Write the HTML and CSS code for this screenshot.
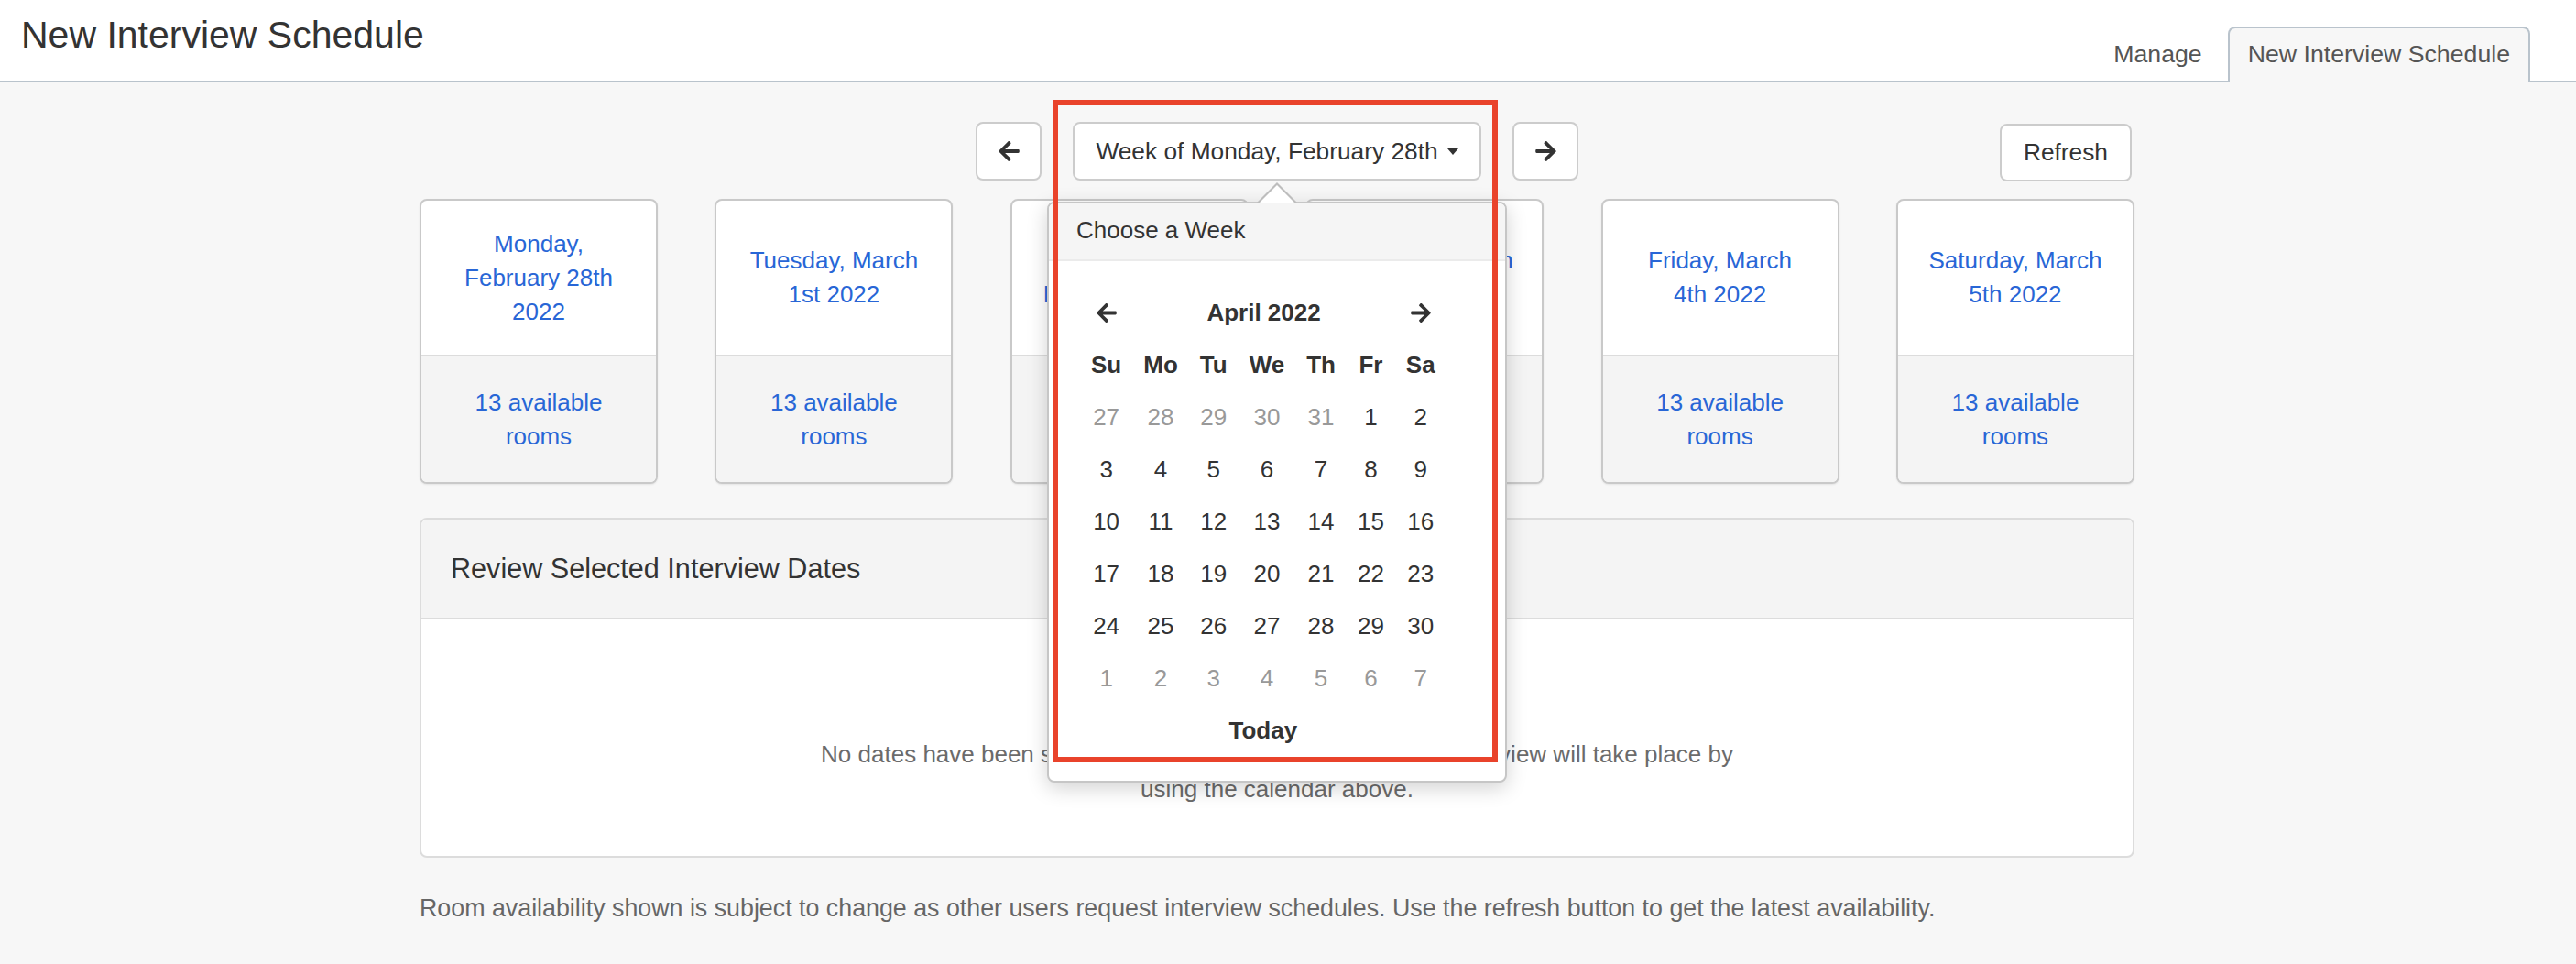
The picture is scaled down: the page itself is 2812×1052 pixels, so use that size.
FILE: index.html
```html
<!DOCTYPE html>
<html lang="en">
<head>
<meta charset="utf-8">
<title>New Interview Schedule</title>
<link rel="stylesheet" href="styles.css">
</head>
<body>
<header class="topbar">
  <h1 class="page-title">New Interview Schedule</h1>
  <ul class="tabs">
    <li class="tab">Manage</li>
    <li class="tab tab-active">New Interview Schedule</li>
  </ul>
</header>

<main class="page">
  <div class="container">
    <div class="toolbar">
      <div class="week-nav">
        <button class="btn btn-icon" type="button" aria-label="Previous week">
          <svg class="arrow" viewBox="0 37 448 438" aria-hidden="true"><path d="M257.5 445.1l-22.2 22.2c-9.4 9.4-24.6 9.4-33.9 0L7 273c-9.4-9.4-9.4-24.6 0-33.9L201.4 44.7c9.4-9.4 24.6-9.4 33.9 0l22.2 22.2c9.5 9.5 9.3 25-.4 34.3L136.6 216H424c13.3 0 24 10.7 24 24v32c0 13.3-10.7 24-24 24H136.6l120.5 114.8c9.8 9.3 10 24.8.4 34.3z"/></svg>
        </button>
        <div class="week-picker">
          <button class="btn btn-week" type="button">Week of Monday, February 28th<span class="caret"></span></button>
          <div class="popover">
            <div class="popover-title">Choose a Week</div>
            <div class="popover-body">
              <table class="cal">
                <thead>
                  <tr>
                    <th class="cal-nav"><svg class="arrow arrow-sm" viewBox="0 37 448 438" aria-hidden="true"><path d="M257.5 445.1l-22.2 22.2c-9.4 9.4-24.6 9.4-33.9 0L7 273c-9.4-9.4-9.4-24.6 0-33.9L201.4 44.7c9.4-9.4 24.6-9.4 33.9 0l22.2 22.2c9.5 9.5 9.3 25-.4 34.3L136.6 216H424c13.3 0 24 10.7 24 24v32c0 13.3-10.7 24-24 24H136.6l120.5 114.8c9.8 9.3 10 24.8.4 34.3z"/></svg></th>
                    <th colspan="5">April 2022</th>
                    <th class="cal-nav"><svg class="arrow arrow-sm arrow-right" viewBox="0 37 448 438" aria-hidden="true"><path d="M257.5 445.1l-22.2 22.2c-9.4 9.4-24.6 9.4-33.9 0L7 273c-9.4-9.4-9.4-24.6 0-33.9L201.4 44.7c9.4-9.4 24.6-9.4 33.9 0l22.2 22.2c9.5 9.5 9.3 25-.4 34.3L136.6 216H424c13.3 0 24 10.7 24 24v32c0 13.3-10.7 24-24 24H136.6l120.5 114.8c9.8 9.3 10 24.8.4 34.3z"/></svg></th>
                  </tr>
                  <tr>
                    <th>Su</th><th>Mo</th><th>Tu</th><th>We</th><th>Th</th><th>Fr</th><th>Sa</th>
                  </tr>
                </thead>
                <tbody>
                  <tr><td class="old">27</td><td class="old">28</td><td class="old">29</td><td class="old">30</td><td class="old">31</td><td>1</td><td>2</td></tr>
                  <tr><td>3</td><td>4</td><td>5</td><td>6</td><td>7</td><td>8</td><td>9</td></tr>
                  <tr><td>10</td><td>11</td><td>12</td><td>13</td><td>14</td><td>15</td><td>16</td></tr>
                  <tr><td>17</td><td>18</td><td>19</td><td>20</td><td>21</td><td>22</td><td>23</td></tr>
                  <tr><td>24</td><td>25</td><td>26</td><td>27</td><td>28</td><td>29</td><td>30</td></tr>
                  <tr><td class="old">1</td><td class="old">2</td><td class="old">3</td><td class="old">4</td><td class="old">5</td><td class="old">6</td><td class="old">7</td></tr>
                </tbody>
                <tfoot>
                  <tr><th colspan="7">Today</th></tr>
                </tfoot>
              </table>
            </div>
          </div>
          <div class="highlight"></div>
        </div>
        <button class="btn btn-icon" type="button" aria-label="Next week">
          <svg class="arrow arrow-right" viewBox="0 37 448 438" aria-hidden="true"><path d="M257.5 445.1l-22.2 22.2c-9.4 9.4-24.6 9.4-33.9 0L7 273c-9.4-9.4-9.4-24.6 0-33.9L201.4 44.7c9.4-9.4 24.6-9.4 33.9 0l22.2 22.2c9.5 9.5 9.3 25-.4 34.3L136.6 216H424c13.3 0 24 10.7 24 24v32c0 13.3-10.7 24-24 24H136.6l120.5 114.8c9.8 9.3 10 24.8.4 34.3z"/></svg>
        </button>
      </div>
      <button class="btn btn-refresh" type="button">Refresh</button>
    </div>

    <div class="days">
      <div class="day">
        <div class="day-date">Monday, February 28th 2022</div>
        <div class="day-rooms">13 available rooms</div>
      </div>
      <div class="day">
        <div class="day-date">Tuesday, March 1st 2022</div>
        <div class="day-rooms">13 available rooms</div>
      </div>
      <div class="day">
        <div class="day-date">Wednesday, March 2nd 2022</div>
        <div class="day-rooms">13 available rooms</div>
      </div>
      <div class="day">
        <div class="day-date">Thursday, March 3rd 2022</div>
        <div class="day-rooms">13 available rooms</div>
      </div>
      <div class="day">
        <div class="day-date">Friday, March 4th 2022</div>
        <div class="day-rooms">13 available rooms</div>
      </div>
      <div class="day">
        <div class="day-date">Saturday, March 5th 2022</div>
        <div class="day-rooms">13 available rooms</div>
      </div>
    </div>

    <section class="review">
      <div class="review-head">
        <h2 class="review-title">Review Selected Interview Dates</h2>
      </div>
      <div class="review-body">
        <p class="review-empty">No dates have been selected. Select the days on which the interview will take place by using the calendar above.</p>
      </div>
    </section>

    <p class="note">Room availability shown is subject to change as other users request interview schedules. Use the refresh button to get the latest availability.</p>
  </div>
</main>
</body>
</html>
```

FILE: styles.css
```css
* {
  box-sizing: border-box;
}

html,
body {
  margin: 0;
  padding: 0;
}

body {
  font-family: "Liberation Sans", Arial, Helvetica, sans-serif;
  font-size: 26px;
  line-height: 37px;
  color: #333;
  background: #f7f7f7;
  min-height: 1052px;
}

/* ---------- Top bar ---------- */
.topbar {
  display: flex;
  justify-content: space-between;
  align-items: flex-end;
  height: 90px;
  padding: 0 50px 0 23px;
  background: #fff;
  border-bottom: 2px solid #b9c3cc;
}

.page-title {
  align-self: flex-start;
  margin: 0;
  padding-top: 17px;
  font-size: 41px;
  line-height: 42px;
  font-weight: normal;
  color: #333;
}

.tabs {
  display: flex;
  list-style: none;
  margin: 0 0 -2px;
  padding: 0;
}

.tab {
  padding: 10px 20px 12px;
  border: 2px solid transparent;
  border-bottom: 0;
  border-radius: 8px 8px 0 0;
  font-size: 26.7px;
  line-height: 37px;
  color: #555;
  white-space: nowrap;
}

.tab + .tab {
  margin-left: 6px;
}

.tab-active {
  background: #f7f7f7;
  border-color: #b9c3cc;
}

/* ---------- Page ---------- */
.page {
  padding: 43px 24px 0 0;
}

.container {
  width: 1872px;
  margin: 0 auto;
}

.toolbar {
  display: grid;
  grid-template-columns: 1fr auto 1fr;
  align-items: start;
}

.week-nav {
  grid-column: 2;
  display: flex;
  gap: 34px;
}

.btn {
  font: inherit;
  font-size: 26.3px;
  line-height: 37px;
  white-space: nowrap;
  color: #333;
  background: #fff;
  border: 2px solid #ccc;
  border-radius: 8px;
  height: 64px;
  padding: 0 20px;
  display: inline-flex;
  align-items: center;
  justify-content: center;
  cursor: pointer;
  margin: 0;
}

.btn-icon {
  width: 72px;
  padding: 0;
}

.arrow {
  width: 25px;
  height: 22px;
  fill: #333;
  display: block;
}

.arrow-sm {
  width: 22px;
  height: 21px;
  margin: 0 auto;
}

.arrow-right {
  transform: scaleX(-1);
}

.week-picker {
  position: relative;
  z-index: 10;
}

.btn-week {
  width: 446px;
}

.caret {
  display: inline-block;
  flex: none;
  width: 0;
  height: 0;
  margin-left: 10px;
  border-top: 7px solid #333;
  border-left: 6px solid transparent;
  border-right: 6px solid transparent;
}

.btn-refresh {
  grid-column: 3;
  justify-self: end;
  height: 63px;
  margin: 2px 3px 0 0;
  padding: 0 24px;
}

/* ---------- Popover calendar ---------- */
.popover {
  position: absolute;
  top: calc(100% + 23px);
  left: 50%;
  width: 502px;
  margin-left: -251px;
  background: #fff;
  border: 2px solid #c6c6c6;
  border-radius: 8px;
  box-shadow: 0 6px 22px rgba(0, 0, 0, 0.18);
}

.popover::before,
.popover::after {
  content: "";
  position: absolute;
  left: 50%;
  width: 0;
  height: 0;
  border-style: solid;
  border-color: transparent;
  border-top-width: 0;
}

.popover::before {
  top: -23px;
  margin-left: -23px;
  border-width: 0 23px 23px;
  border-bottom-color: #bdbdbd;
}

.popover::after {
  top: -20px;
  margin-left: -20px;
  border-width: 0 20px 20px;
  border-bottom-color: #fff;
}

.popover-title {
  background: #f5f5f5;
  border-bottom: 2px solid #ebebeb;
  border-radius: 6px 6px 0 0;
  padding: 11px 30px 13px;
  line-height: 37px;
  color: #333;
}

.popover-body {
  padding: 28px 34px 26px;
}

.cal {
  border-collapse: collapse;
  border-spacing: 0;
}

.cal th,
.cal td {
  height: 57px;
  padding: 0 12px;
  text-align: center;
  vertical-align: middle;
  line-height: 37px;
  color: #333;
}

.cal th {
  font-weight: bold;
}

.cal td.old {
  color: #999;
}

.highlight {
  position: absolute;
  top: -24px;
  left: -22px;
  width: 486px;
  height: 723px;
  border: 6px solid #e9432b;
  z-index: 20;
  pointer-events: none;
}

/* ---------- Day cards ---------- */
.days {
  display: flex;
  justify-content: space-between;
  margin-top: 19px;
}

.day {
  width: 260px;
  height: 311px;
  display: flex;
  flex-direction: column;
  background: #fff;
  border: 2px solid #c9c9c9;
  border-radius: 8px;
  overflow: hidden;
  box-shadow: 0 1px 2px rgba(0, 0, 0, 0.08);
  color: #2866d6;
}

.day-date {
  height: 168px;
  display: flex;
  align-items: center;
  justify-content: center;
  text-align: center;
  padding: 0 28px;
}

.day-rooms {
  flex: 1;
  display: flex;
  align-items: center;
  justify-content: center;
  text-align: center;
  padding: 0 28px;
  background: #f4f4f4;
  border-top: 2px solid #dcdcdc;
}

/* ---------- Review panel ---------- */
.review {
  margin-top: 37px;
  background: #fff;
  border: 2px solid #dcdcdc;
  border-radius: 8px;
  overflow: hidden;
}

.review-head {
  background: #f4f4f4;
  border-bottom: 2px solid #dcdcdc;
  padding: 32px 32px 33px;
}

.review-title {
  margin: 0;
  font-size: 30.6px;
  line-height: 42px;
  font-weight: normal;
  color: #333;
}

.review-body {
  padding: 128px 32px 54px;
  text-align: center;
}

.review-empty {
  max-width: 1030px;
  margin: 0 auto;
  line-height: 38px;
  color: #6b6b6b;
}

.note {
  margin: 37px 0 0;
  font-size: 26.8px;
  line-height: 37px;
  color: #666;
}
```
